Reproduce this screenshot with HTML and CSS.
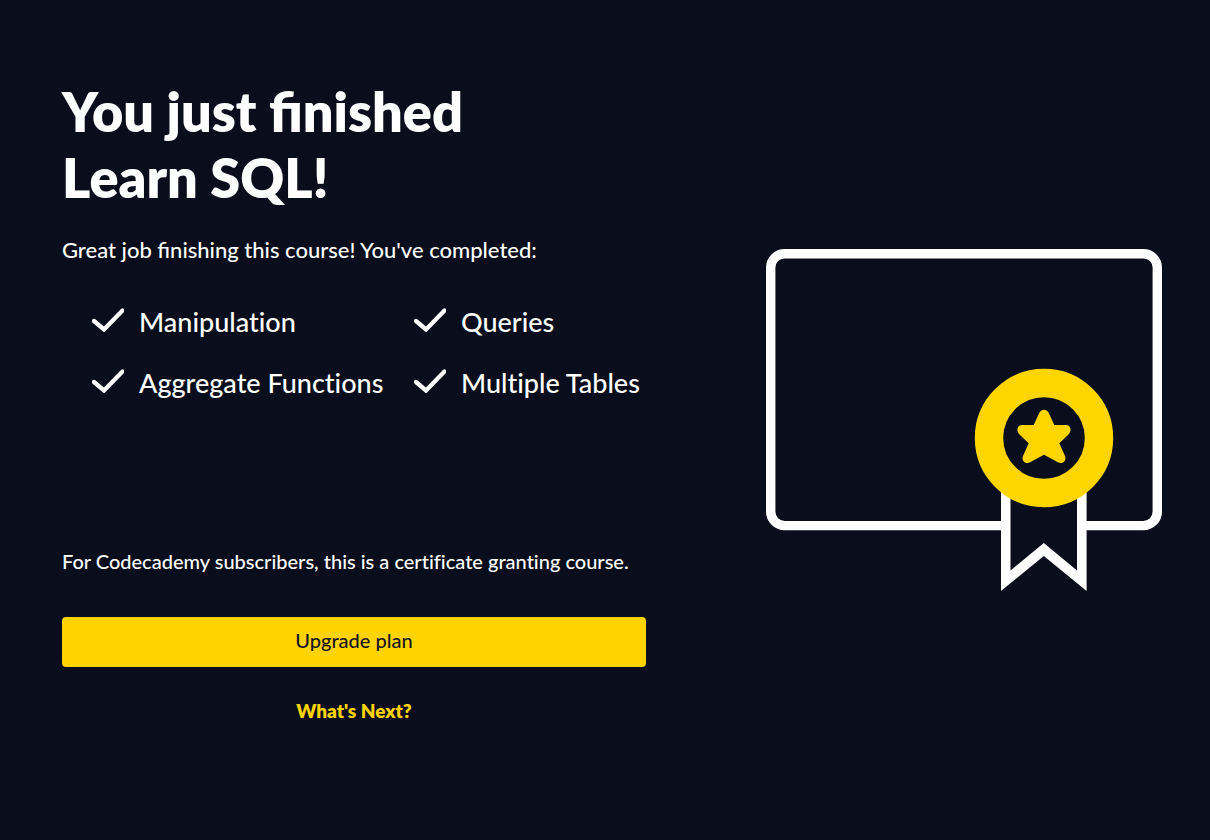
FILE: index.html
```html
<!DOCTYPE html>
<html lang="en">
<head>
<meta charset="utf-8">
<meta name="viewport" content="width=device-width, initial-scale=1">
<title>Course complete</title>
<link rel="stylesheet" href="styles.css">
</head>
<body>
<svg class="sprite" aria-hidden="true">
  <symbol id="check" viewBox="0 0 32 24"><path d="M2 13L12 21.500L30.500 2.500" fill="none" stroke="currentColor" stroke-width="4.300" stroke-linecap="round"/></symbol>
</svg>
<main class="completion">
  <section class="summary">
    <h1 class="title">You just finished<br>Learn SQL!</h1>
    <p class="lead">Great job finishing this course! You've completed:</p>
    <ul class="topics">
      <li class="topic"><svg class="check" aria-hidden="true"><use href="#check"/></svg>Manipulation</li>
      <li class="topic"><svg class="check" aria-hidden="true"><use href="#check"/></svg>Queries</li>
      <li class="topic"><svg class="check" aria-hidden="true"><use href="#check"/></svg>Aggregate Functions</li>
      <li class="topic"><svg class="check" aria-hidden="true"><use href="#check"/></svg>Multiple Tables</li>
    </ul>
    <p class="note">For Codecademy subscribers, this is a certificate granting course.</p>
    <button class="upgrade" type="button">Upgrade plan</button>
    <a class="next" href="#next">What's Next?</a>
  </section>
  <svg class="certificate" viewBox="0 0 396 342" role="img" aria-label="Certificate with a ribbon">
    <rect x="4.700" y="4.700" width="386.600" height="271.900" rx="14" fill="none" stroke="#fff" stroke-width="9.400"/>
    <path class="ribbon" d="M235 230V342L277.800 307L320.600 342V230Z"/>
    <path class="dark" d="M244.500 230V321.500L277.800 294L311 321.500V230Z"/>
    <circle class="dark" cx="278" cy="189" r="60"/>
    <circle cx="278" cy="189" r="55" fill="none" stroke="#ffd500" stroke-width="28.400"/>
    <path class="star" d="M273 164.500C275 159.500 281 159.500 283 164.500L288.300 176H300C305 176 306 182 302.500 185.500L293.300 194.300L299 207C301 212 296 216 291.500 213L278 205.700L264.500 213C260 216 255 212 257 207L262.700 194.300L253.500 185.500C250 182 251 176 256 176H267.700Z"/>
  </svg>
</main>
</body>
</html>
```

FILE: styles.css
```css
* {
  box-sizing: border-box;
}

body {
  margin: 0;
  background: #0a0e1c;
  color: #fff;
  font-family: Lato, "Liberation Sans", sans-serif;
  font-weight: 500;
}

.sprite {
  display: none;
}

.completion {
  display: grid;
  grid-template-columns: 584fr 396fr;
  gap: 120px;
  align-items: center;
  min-height: 100vh;
  padding: 0 48px 0 62px;
}

.summary {
  display: flex;
  flex-direction: column;
  padding-bottom: 34px;
}

.title {
  margin: 0 0 23px;
  font-size: 54px;
  line-height: 66px;
  font-weight: 800;
}

.lead {
  margin: 0 0 36px;
  font-size: 22px;
  line-height: 32px;
}

.topics {
  display: grid;
  grid-template-columns: 292px auto;
  gap: 21px 30px;
  margin: 0 0 142px;
  padding: 0 0 0 30px;
  list-style: none;
  font-size: 27px;
  line-height: 40px;
  font-variant-ligatures: no-common-ligatures;
}

.topic {
  display: flex;
  align-items: center;
  gap: 15px;
  white-space: nowrap;
}

.check {
  flex: none;
  width: 32px;
  height: 24px;
  margin-bottom: 4px;
}

.note {
  margin: 0 0 40px;
  font-size: 20px;
  line-height: 32px;
  font-variant-ligatures: no-common-ligatures;
}

.upgrade {
  height: 50px;
  padding: 0 0 4px;
  border: 0;
  border-radius: 4px;
  background: #ffd300;
  color: #15141f;
  font: 500 20px Lato, "Liberation Sans", sans-serif;
  cursor: pointer;
}

.next {
  align-self: center;
  margin-top: 28px;
  color: #ffd300;
  font-size: 19px;
  line-height: 32px;
  font-weight: 800;
  text-decoration: none;
}

.certificate {
  display: block;
  width: 100%;
}

.ribbon {
  fill: #fff;
}

.dark {
  fill: #0a0e1c;
}

.star {
  fill: #ffd500;
}

@media (max-width: 900px) {
  .completion {
    grid-template-columns: 1fr;
    gap: 48px;
    padding: 48px;
  }
}
```
